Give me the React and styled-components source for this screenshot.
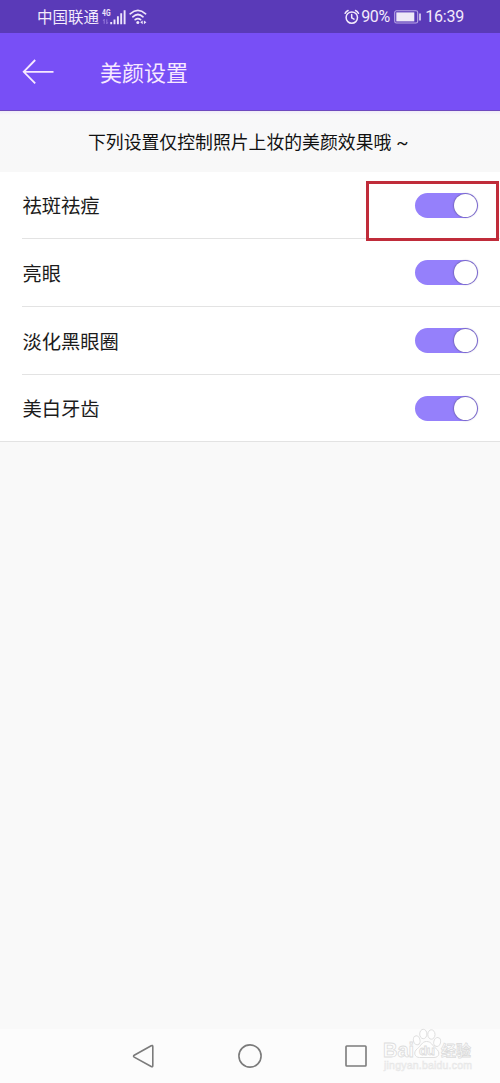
import React from 'react';
import styled, { createGlobalStyle } from 'styled-components';

const initialSettings = [
  { id: 'spot', label: '祛斑祛痘', on: true, marked: true },
  { id: 'eye', label: '亮眼', on: true },
  { id: 'circle', label: '淡化黑眼圈', on: true },
  { id: 'teeth', label: '美白牙齿', on: true },
];

const App = () => {
  const [settings, setSettings] = React.useState(initialSettings);

  const toggle = (id) => {
    setSettings(
      settings.map((item) => (item.id === id ? { ...item, on: !item.on } : item))
    );
  };

  return (
    <Screen>
      <GlobalStyle />
      <StatusBar>
        <StatusGroup>
          <Carrier>中国联通</Carrier>
          <SignalIcon />
          <WifiIcon />
        </StatusGroup>
        <StatusGroup>
          <AlarmIcon />
          <Percent>90%</Percent>
          <BatteryIcon />
          <Time>16:39</Time>
        </StatusGroup>
      </StatusBar>
      <Header>
        <BackButton aria-label="返回">
          <svg width="32" height="26" viewBox="0 0 32 26">
            <path
              d="M31.5 12.8H1.7M13.2 1L1.7 12.8L13.2 24.4"
              fill="none"
              stroke="#f7e9ff"
              strokeWidth="1.8"
            />
          </svg>
        </BackButton>
        <Title>美颜设置</Title>
      </Header>
      <Notice>
        下列设置仅控制照片上妆的美颜效果哦
        <Tilde>~</Tilde>
      </Notice>
      <List>
        {settings.map((item) => (
          <Row key={item.id}>
            <RowInner>
              <Label>{item.label}</Label>
              <Switch
                role="switch"
                aria-checked={item.on}
                $on={item.on}
                onClick={() => toggle(item.id)}
              >
                <Knob />
              </Switch>
            </RowInner>
            {item.marked && <Marker />}
          </Row>
        ))}
      </List>
      <NavBar>
        <NavIcon>
          <path d="M20.8 2.6V21.6Q20.8 23.4 19.2 22.5L2.2 13.1Q0.9 12.1 2.2 11.2L19.2 1.8Q20.8 0.9 20.8 2.6Z" />
        </NavIcon>
        <NavIcon>
          <circle cx="12" cy="12" r="11.1" />
        </NavIcon>
        <NavIcon>
          <rect x="2" y="2" width="20" height="20" rx="0.8" />
        </NavIcon>
        <Watermark />
      </NavBar>
    </Screen>
  );
};

export default App;

const SignalIcon = () => (
  <svg width="26" height="18" viewBox="0 0 26 18">
    <SmallText x="1" y="8.3" textLength="8.5" lengthAdjust="spacingAndGlyphs">
      4G
    </SmallText>
    <path
      d="M3.2 15.8V11.3L2.2 12.8M5.8 11.3V15.8L6.8 14.3"
      fill="none"
      stroke="#9b80e0"
      strokeWidth="0.9"
    />
    <path
      d="M10.2 14V16.2M13.5 11.5V16.2M16.9 8.3V16.2M20.2 5.2V16.2M23.6 2.2V16.2"
      fill="none"
      stroke="#eee5fb"
      strokeWidth="1.9"
    />
  </svg>
);

const WifiIcon = () => (
  <WifiSvg width="18" height="18" viewBox="0 0 18 18">
    <g fill="none" stroke="#eee5fb" strokeWidth="1.7" strokeLinecap="round">
      <path d="M1.2 5.8Q8.9 -0.9 16.6 5.8" />
      <path d="M3.8 8.8Q8.9 4.2 14 8.8" />
      <path d="M6.2 11.7Q8.9 9.4 11.6 11.7" />
    </g>
    <circle cx="8.8" cy="14.4" r="1.5" fill="#eee5fb" />
    <path d="M11.2 14.3L13.7 12.4V16.2ZM17.4 14.3L14.9 12.4V16.2Z" fill="#eee5fb" />
  </WifiSvg>
);

const AlarmIcon = () => (
  <svg width="16" height="16" viewBox="0 0 16 16">
    <g fill="none" stroke="#f3eafc" strokeWidth="1.5" strokeLinecap="round">
      <circle cx="7.8" cy="8.6" r="5.7" />
      <path d="M7.7 5.5V8.8L10 10.2" />
      <path d="M1.1 4.3Q2.1 2.3 4.1 1.5M14.5 4.3Q13.5 2.3 11.5 1.5" />
    </g>
  </svg>
);

const BatteryIcon = () => (
  <BatterySvg width="28" height="14" viewBox="0 0 28 14">
    <rect
      x="0.7"
      y="0.8"
      width="23"
      height="12.2"
      rx="1.8"
      fill="none"
      stroke="#b9a6e6"
      strokeWidth="1.1"
    />
    <rect x="2.3" y="2.4" width="18" height="9" fill="#eee9f7" />
    <path d="M26 3.4V10.4" stroke="#e5dcf6" strokeWidth="1.6" />
  </BatterySvg>
);

const Watermark = () => (
  <WatermarkSvg width="94" height="48" viewBox="0 0 94 48">
    <g fill="#fefefe" stroke="#dfdfdf" strokeWidth="1">
      <ellipse cx="45.7" cy="18.3" rx="3.3" ry="4.5" transform="rotate(-15 45.7 18.3)" />
      <ellipse cx="52.3" cy="12" rx="3.6" ry="4.7" />
      <ellipse cx="60.4" cy="12.5" rx="3.6" ry="4.7" />
      <ellipse cx="66.2" cy="20" rx="3.4" ry="4.5" transform="rotate(15 66.2 20)" />
      <path d="M55.5 19.5C51 19.5 50 24 46.5 26.5C41.5 30.5 44 35.5 48.5 35.5H63C68.5 35.5 69.5 30 65 26.5C61 23.5 60.5 19.5 55.5 19.5Z" />
    </g>
    <MarkText x="12" y="35" $size={20} textLength="31">
      Bai
    </MarkText>
    <MarkText x="48" y="33.3" $size={13.5} textLength="16">
      du
    </MarkText>
    <MarkText x="70" y="34" $size={15} textLength="30">
      经验
    </MarkText>
    <MarkUrl x="13" y="46.8" textLength="88">
      jingyan.baidu.com
    </MarkUrl>
  </WatermarkSvg>
);

const GlobalStyle = createGlobalStyle`
  body {
    margin: 0;
    background-color: #f9f9f9;
    font-family: Roboto, 'Noto Sans CJK SC', sans-serif;
  }
`;

const Screen = styled.div`
  display: flex;
  flex-direction: column;
  width: 500px;
  height: 1083px;
  overflow: hidden;
  background-color: #f9f9f9;
`;

const StatusBar = styled.div`
  display: flex;
  flex: none;
  box-sizing: border-box;
  height: 33px;
  padding: 0 36px 0 37px;
  justify-content: space-between;
  align-items: center;
  background-color: #5a3ab8;
  color: #f3eafc;
`;

const StatusGroup = styled.div`
  display: flex;
  height: 33px;
  align-items: center;
`;

const Carrier = styled.span`
  width: 64px;
  padding-top: 3px;
  font-size: 15.5px;
  line-height: 33px;
  white-space: nowrap;
`;

const SmallText = styled.text`
  fill: #eee5fb;
  font-size: 9px;
  font-weight: 700;
`;

const WifiSvg = styled.svg`
  margin-left: 2px;
`;

const Percent = styled.span`
  width: 33px;
  margin-left: 1px;
  font-size: 16px;
  letter-spacing: -0.35px;
  line-height: 34px;
`;

const BatterySvg = styled.svg`
  margin: 0 3px 0 0;
`;

const Time = styled.span`
  font-size: 16px;
  letter-spacing: -0.2px;
  line-height: 34px;
`;

const Header = styled.header`
  display: flex;
  flex: none;
  box-sizing: border-box;
  height: 78px;
  padding-left: 22px;
  align-items: center;
  border-bottom: 1px solid #6f4abf;
  background-color: #784ff6;
`;

const BackButton = styled.button`
  display: flex;
  width: 78px;
  padding: 0;
  border: none;
  background: none;
  cursor: pointer;
`;

const Title = styled.h1`
  margin: 0;
  padding-bottom: 2px;
  color: #f7e9ff;
  font-size: 22px;
  font-weight: 400;
`;

const Notice = styled.p`
  flex: none;
  box-sizing: border-box;
  height: 61px;
  margin: 0;
  padding-left: 88px;
  background: linear-gradient(#efecf8, #f8f8f9 4px, #f8f8f8);
  color: #111;
  font-size: 17.85px;
  line-height: 64px;
  white-space: nowrap;
`;

const Tilde = styled.span`
  margin-left: 5px;
  font-size: 18px;
`;

const List = styled.div`
  flex: 1;
`;

const Row = styled.div`
  position: relative;
  padding-left: 22px;
  background-color: #fff;
  &:last-child {
    padding-left: 0;
  }
`;

const RowInner = styled.div`
  display: flex;
  box-sizing: border-box;
  height: 68px;
  padding-right: 22px;
  justify-content: space-between;
  align-items: center;
  border-bottom: 1px solid #e3e3e3;
  ${Row}:first-child &,
  ${Row}:last-child & {
    height: 67px;
  }
  ${Row}:last-child & {
    padding-left: 22px;
  }
`;

const Label = styled.span`
  padding: 4px 0 0 0.5px;
  color: #1c1c1c;
  font-size: 19.3px;
  line-height: 30px;
`;

const Switch = styled.button`
  display: flex;
  box-sizing: border-box;
  width: 63px;
  height: 25px;
  padding: 0 1px;
  border: none;
  border-radius: 13px;
  justify-content: ${(props) => (props.$on ? 'flex-end' : 'flex-start')};
  align-items: center;
  background-color: ${(props) => (props.$on ? '#9580fb' : '#ccc')};
  cursor: pointer;
`;

const Knob = styled.span`
  width: 23px;
  height: 23px;
  border-radius: 50%;
  background-color: #fff;
  box-shadow: 0 0 1.5px 0.5px rgba(70, 60, 110, 0.65);
`;

// red frame drawn over the row that needs attention
const Marker = styled.div`
  position: absolute;
  z-index: 1;
  top: 9px;
  right: 1px;
  box-sizing: border-box;
  width: 133px;
  height: 60px;
  border: 3px solid #c02c3a;
  pointer-events: none;
`;

const NavBar = styled.nav`
  position: relative;
  display: flex;
  flex: none;
  height: 54px;
  justify-content: center;
  align-items: center;
  gap: 82px;
  background-color: #fcfcfc;
`;

const NavIcon = styled.svg.attrs({ viewBox: '0 0 24 24' })`
  width: 24px;
  height: 24px;
  fill: none;
  stroke: #7b7b7b;
  stroke-width: 1.6px;
`;

const WatermarkSvg = styled.svg`
  position: absolute;
  right: 35px;
  bottom: 13px;
  overflow: visible;
`;

const MarkText = styled.text`
  fill: #fdfdfd;
  stroke: #dcdcdc;
  stroke-width: 0.8px;
  font-family: 'Liberation Sans', 'Noto Sans CJK SC', sans-serif;
  font-size: ${(props) => props.$size}px;
  font-weight: 700;
`;

const MarkUrl = styled.text`
  fill: #f6f6f6;
  stroke: #e6e6e6;
  stroke-width: 0.5px;
  font-family: 'Liberation Sans', sans-serif;
  font-size: 10.5px;
`;
